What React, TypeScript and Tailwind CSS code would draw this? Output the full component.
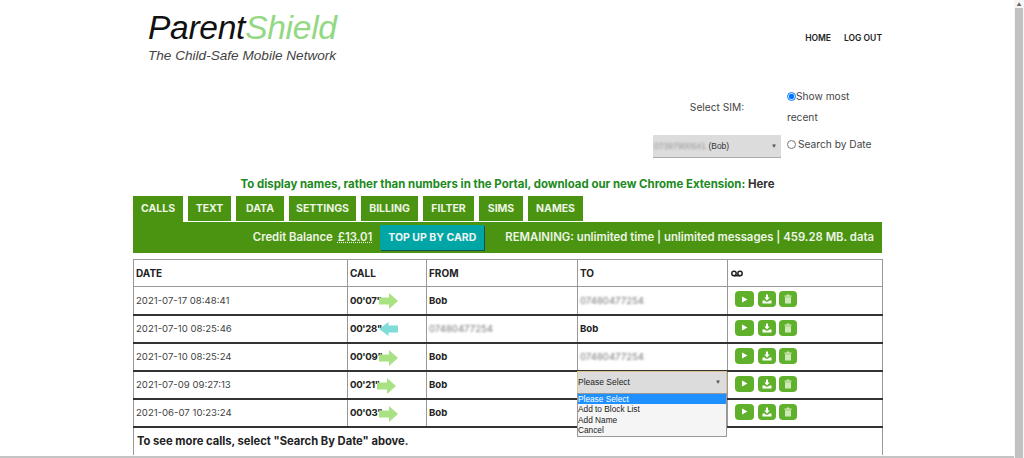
const font = "font-['Inter','Open_Sans',sans-serif]";

const tabs = [
  { name: "CALLS", w: "w-[50px]" },
  { name: "TEXT", w: "w-[43px]" },
  { name: "DATA", w: "w-[48px]" },
  { name: "SETTINGS", w: "w-[67px]" },
  { name: "BILLING", w: "w-[57px]" },
  { name: "FILTER", w: "w-[51px]" },
  { name: "SIMS", w: "w-[44px]" },
  { name: "NAMES", w: "w-[55px]" },
];

const calls = [
  { date: "2021-07-17 08:48:41", len: "00'07\"", dir: "out", from: "Bob", to: "07480477254" },
  { date: "2021-07-10 08:25:46", len: "00'28\"", dir: "in", from: "07480477254", to: "Bob" },
  { date: "2021-07-10 08:25:24", len: "00'09\"", dir: "out", from: "Bob", to: "07480477254" },
  { date: "2021-07-09 09:27:13", len: "00'21\"", dir: "out", from: "Bob", to: "select" },
  { date: "2021-06-07 10:23:24", len: "00'03\"", dir: "out", from: "Bob", to: "" },
];

const Party = ({ value }: { value: string }) =>
  value === "Bob" ? (
    <span className="font-bold text-[#222]">Bob</span>
  ) : (
    <span className="text-[#777] blur-[1px]">{value}</span>
  );

const CallArrow = ({ dir }: { dir: string }) =>
  dir === "out" ? (
    <svg width="19" height="16" viewBox="0 0 19 16" className="-ml-[3px] shrink-0">
      <path d="M0 4.5h10V0l9 8-9 8v-4.5H0z" fill="#a8e283" />
    </svg>
  ) : (
    <svg width="19" height="14" viewBox="0 0 19 14" className="-ml-[3px] shrink-0">
      <path d="M19 3.5H9.5V0L0 7l9.5 7v-3.5H19z" fill="#80dcd8" />
    </svg>
  );

const ActionButtons = () => (
  <div className="flex gap-[3.5px] pl-[7px]">
    <button className="flex h-[16px] w-[19px] items-center justify-center rounded-[4px] bg-[#5fb02a]">
      <svg width="7" height="7" viewBox="0 0 7 7">
        <path d="M1 0.5 L6.5 3.5 L1 6.5 Z" fill="#fff" />
      </svg>
    </button>
    <button className="flex h-[16px] w-[18px] items-center justify-center rounded-[4px] bg-[#5fb02a]">
      <svg width="10" height="10" viewBox="0 0 10 10">
        <path d="M4 0.5h2v3h1.8L5 6.4 2.2 3.5H4z" fill="#fff" />
        <path d="M0.5 6.5h2.3L4 7.7h2l1.2-1.2h2.3v3h-9z" fill="#fff" />
      </svg>
    </button>
    <button className="flex h-[16px] w-[18px] items-center justify-center rounded-[4px] bg-[#5fb02a]">
      <svg width="8" height="10" viewBox="0 0 8 10">
        <path d="M2.8 0.5h2.4v1H7.5v1.2H0.5V1.5h2.3z" fill="#cfe8b8" />
        <path d="M1 3.2h6v6.3H1z" fill="#cfe8b8" />
      </svg>
    </button>
  </div>
);

const PleaseSelect = () => (
  <div className="relative -ml-[3px] -mt-px h-[24px] w-[150px]">
    <div className="flex h-[23px] items-center justify-between border border-[#d9c48f] bg-[#dcdcdc] pr-[5px] font-['Liberation_Sans',sans-serif] text-[8.5px] text-[#222]">
      Please Select
      <span className="text-[6px] text-[#555]">▼</span>
    </div>
    <ul className="absolute left-0 top-[22px] z-10 w-[150px] border border-[#999] bg-[#f5f5f5] font-['Liberation_Sans',sans-serif] text-[8.3px] leading-[10.6px] text-[#222]">
      <li className="bg-[#1e90ff] text-white">Please Select</li>
      <li>Add to Block List</li>
      <li>Add Name</li>
      <li>Cancel</li>
    </ul>
  </div>
);

const App = () => {
  return (
    <div className={`flex h-[458px] w-[1024px] overflow-hidden bg-white ${font}`}>
      <div className="flex h-[458px] w-[1014px] flex-col">
        <div className="h-[456px] overflow-hidden">
          <div className="ml-[133px] w-[749px]">
            {/* Header */}
            <div className="flex h-[72px] items-start justify-between">
              <div className="ml-[15px] pt-[10px] font-['Liberation_Sans',sans-serif] italic">
                <div className="text-[33.6px] leading-[35px] tracking-[-0.3px] text-[#111]">
                  Parent<span className="text-[#93d882]">Shield</span>
                </div>
                <div className="mt-[3px] text-[13.6px] leading-[16px] text-[#444]">
                  The Child-Safe Mobile Network
                </div>
              </div>
              <div className="flex gap-[13px] pt-[32px] text-[8.5px] font-semibold leading-[12px] text-[#222]">
                <span>HOME</span>
                <span>LOG OUT</span>
              </div>
            </div>

            {/* SIM picker */}
            <div className="ml-[520px] flex h-[97px] text-[10.2px] text-[#444]">
              <div className="w-[134px] pt-[10px]">
                <div className="w-[128px] pt-[18px] text-center leading-[14px]">Select SIM:</div>
                <div className="mt-[21px] flex h-[23px] w-[128px] items-center justify-between border-b border-[#aaa] bg-[#dcdcdc] pl-px pr-[4px] font-['Liberation_Sans',sans-serif] text-[8.5px] text-[#333]">
                  <span>
                    <span className="text-[#999] blur-[1px]">07397900641</span> (Bob)
                  </span>
                  <span className="text-[6px] text-[#555]">▼</span>
                </div>
              </div>
              <div className="w-[95px] pt-[14px] leading-[21px]">
                <div className="flex items-center">
                  <input type="radio" name="sim" defaultChecked className="m-0 h-[9px] w-[9px]" />
                  <span>Show most</span>
                </div>
                <div>recent</div>
                <div className="mt-[6px] flex items-center gap-[2px]">
                  <input type="radio" name="sim" className="m-0 h-[9px] w-[9px]" />
                  <span>Search by Date</span>
                </div>
              </div>
            </div>

            {/* Chrome extension notice */}
            <p className="h-[27px] whitespace-nowrap pt-[8px] text-center text-[11.45px] font-bold leading-[15px] text-[#1c8a1c]">
              To display names, rather than numbers in the Portal, download our new Chrome Extension:{" "}
              <span className="text-[#333]">Here</span>
            </p>

            {/* Tabs */}
            <div className="flex h-[26px] gap-[5px]">
              {tabs.map((tab, i) => (
                <div
                  key={tab.name}
                  className={`flex items-center justify-center bg-[#4a9412] text-[10.5px] font-bold text-[#eef5e6] ${tab.w} ${i === 0 ? "h-[26px]" : "h-[25px]"}`}
                >
                  {tab.name}
                </div>
              ))}
            </div>

            {/* Balance bar */}
            <div className="flex h-[31px] items-center justify-end gap-[21px] bg-[#4a9412] pr-[8px] text-[11.35px] font-semibold text-[#eef5e6]">
              <div className="flex items-center">
                <span>Credit Balance</span>
                <span className="ml-[5px] underline decoration-dotted">£13.01</span>
                <button className="ml-[8px] h-[25px] w-[104px] bg-[#00a5a5] text-[10.5px] font-bold text-[#eef5f5] shadow-[1px_1px_0_#14505a]">
                  TOP UP BY CARD
                </button>
              </div>
              <span className="whitespace-nowrap">REMAINING: unlimited time | unlimited messages | 459.28 MB. data</span>
            </div>

            {/* Call log */}
            <table className="mt-[6px] w-[749px] table-fixed border-collapse border-t border-[#999] text-[9.6px] text-[#444]">
              <colgroup>
                <col className="w-[214px]" />
                <col className="w-[79px]" />
                <col className="w-[151px]" />
                <col className="w-[150px]" />
                <col className="w-[155px]" />
              </colgroup>
              <thead>
                <tr className="h-[27px] border-b border-[#999] text-left text-[10px] font-bold text-[#222]">
                  <th className="border-x border-[#999] pl-[2px]">DATE</th>
                  <th className="border-x border-[#999] pl-[2px]">CALL</th>
                  <th className="border-x border-[#999] pl-[2px]">FROM</th>
                  <th className="border-x border-[#999] pl-[2px]">TO</th>
                  <th className="border-x border-[#999] pl-[3px]">
                    <svg width="12" height="7" viewBox="0 0 12 7" fill="none" stroke="#222" strokeWidth="1.5">
                      <circle cx="3" cy="3.5" r="2.2" />
                      <circle cx="9" cy="3.5" r="2.2" />
                      <path d="M3 5.7h6" />
                    </svg>
                  </th>
                </tr>
              </thead>
              <tbody>
                {calls.map((call) => (
                  <tr key={call.date} className="h-[28px] border-b-2 border-[#333]">
                    <td className="border-x border-[#999] pl-[2px] pt-[2px]">{call.date}</td>
                    <td className="border-x border-[#999] pl-[2px] pt-[2px]">
                      <div className="flex items-center font-bold tracking-[-0.3px] text-[#222]">
                        {call.len}
                        <CallArrow dir={call.dir} />
                      </div>
                    </td>
                    <td className="border-x border-[#999] pl-[2px] pt-[2px]">
                      <Party value={call.from} />
                    </td>
                    <td className={`border-x border-[#999] pl-[2px] ${call.to === "select" ? "align-top" : "pt-[2px]"}`}>
                      {call.to === "select" ? <PleaseSelect /> : call.to ? <Party value={call.to} /> : null}
                    </td>
                    <td className="border-x border-[#999] pb-[2px]">
                      <ActionButtons />
                    </td>
                  </tr>
                ))}
                <tr className="h-[28px]">
                  <td colSpan={5} className="border-x border-[#999] pl-[3px] text-[11.2px] font-bold text-[#222]">
                    To see more calls, select "Search By Date" above.
                  </td>
                </tr>
              </tbody>
            </table>
          </div>
        </div>
        <div className="h-[2px] bg-[#c4c4c4]" />
      </div>

      {/* Scrollbar */}
      <div className="flex w-[10px] flex-col items-center bg-[#f5f5f5]">
        <span className="mt-[2px] text-[5px] leading-[5px] text-[#666]">▲</span>
        <div className="mt-[1px] h-[450px] w-[8px] bg-[#c1c1c1]" />
      </div>
    </div>
  );
};

export default App;
